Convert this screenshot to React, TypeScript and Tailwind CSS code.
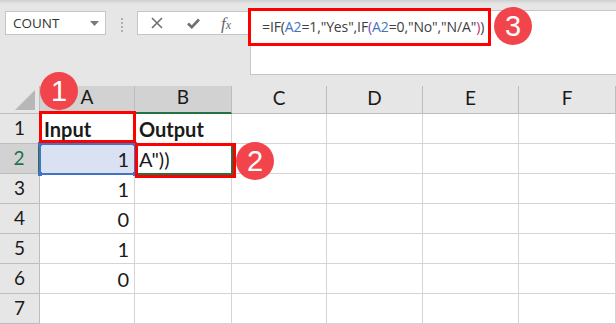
import React from 'react'

const cols = ['A', 'B', 'C', 'D', 'E', 'F']
const colW = [95, 97, 95, 96, 96, 97]
const inputs = ['1', '1', '0', '1', '0']

function Badge({ n, className }: { n: number; className: string }) {
  return (
    <div
      className={`absolute flex items-center justify-center rounded-full bg-[#f2444b] text-white text-[29px] leading-none font-[Arial,'Liberation_Sans',sans-serif] ${className}`}
    >
      {n}
    </div>
  )
}

export default function App() {
  const line = 'border-r border-b border-[#d4d4d4]'
  return (
    <div className="relative w-[616px] h-[324px] overflow-hidden bg-[#e6e6e6] font-[Lato,'Noto_Sans',sans-serif] text-[#1a1a1a]">
      {/* top shade */}
      <div className="h-[4px] bg-gradient-to-b from-[#cfcfcf] to-[#e6e6e6]" />

      {/* formula toolbar */}
      <div className="flex items-start pl-[5px] pt-[6px] h-[82px]">
        <div className="mt-[1px] flex h-[24px] w-[101px] items-center justify-between border border-[#c6c6c6] bg-white pl-[7px] pr-[6px] font-['Open_Sans',sans-serif] text-[13.5px] text-[#333]">
          <span>COUNT</span>
          <svg width="9" height="5" viewBox="0 0 9 5">
            <path d="M0 0 L9 0 L4.5 5 Z" fill="#7a7a7a" />
          </svg>
        </div>
        <div className="mt-[8px] flex w-[31px] flex-col items-center gap-[2px]">
          <span className="h-[2px] w-[2px] bg-[#b0b0b0]" />
          <span className="h-[2px] w-[2px] bg-[#b0b0b0]" />
          <span className="h-[2px] w-[2px] bg-[#b0b0b0]" />
          <span className="h-[2px] w-[2px] bg-[#b0b0b0]" />
        </div>
        <div className="mt-[1px] flex h-[24px] w-[112px] items-center border border-[#c6c6c6] bg-white pl-[13px]">
          <svg width="12" height="12" viewBox="0 0 12 12">
            <path d="M1 1 L11 11 M11 1 L1 11" stroke="#707070" strokeWidth="1.6" />
          </svg>
          <svg className="ml-[24px]" width="13" height="11" viewBox="0 0 13 11">
            <path d="M1 5.5 L4.8 9.2 L12 1.5" stroke="#707070" strokeWidth="2.6" fill="none" />
          </svg>
          <span className="ml-[21px] font-['Liberation_Serif',serif] text-[17px] leading-none italic text-[#666]">
            f<span className="text-[12px]">x</span>
          </span>
        </div>
        <div className="ml-[1px] h-[65px] flex-1 whitespace-nowrap border border-r-0 border-[#c6c6c6] bg-white pl-[11px] pt-[5px] font-['Open_Sans',sans-serif] text-[14px] tracking-[-0.12px] text-[#404040]">
          <span>=IF(</span>
          <span className="text-[#4472c4]">A2</span>
          <span>=1,"Yes",IF</span>
          <span className="text-[#7f3fbf]">(</span>
          <span className="text-[#4472c4]">A2</span>
          <span>=0,"No","N/A"</span>
          <span className="text-[#c0307a]">)</span>
          <span>)</span>
        </div>
      </div>

      {/* grid */}
      <div
        className="grid"
        style={{ gridTemplateColumns: `40px ${colW.map(w => w + 'px').join(' ')}`, gridTemplateRows: '28px repeat(7, 30px)' }}
      >
        {/* select all */}
        <div className="relative border-r border-b border-[#bdbdbd] bg-[#e6e6e6]">
          <svg className="absolute right-[4px] bottom-[3px]" width="20" height="20" viewBox="0 0 20 20">
            <path d="M20 0 L20 20 L0 20 Z" fill="#b7b7b7" />
          </svg>
        </div>
        {cols.map((c, i) => (
          <div
            key={c}
            className={`flex items-end justify-center pb-[1px] text-[19px] border-r ${
              i < 2 ? 'bg-[#d2d2d2] border-b-2 border-b-[#217346] border-r-[#bdbdbd]' : 'bg-[#e6e6e6] border-b border-[#bdbdbd]'
            }`}
          >
            {c}
          </div>
        ))}

        {Array.from({ length: 7 }, (_, r) => {
          const row = r + 1
          return (
            <React.Fragment key={row}>
              <div
                className={`flex items-center justify-center text-[19px] border-b ${
                  row === 2
                    ? 'bg-[#d2d2d2] text-[#217346] border-r-2 border-r-[#217346] border-b-[#bdbdbd]'
                    : 'bg-[#e6e6e6] border-r border-[#bdbdbd]'
                }`}
              >
                {row}
              </div>
              {/* A */}
              <div
                className={`flex items-center text-[20px] ${line} ${
                  row === 1 ? 'font-bold pl-[4px]' : 'justify-end pr-[5px]'
                } ${row === 2 ? 'bg-[#d9e1f2]' : 'bg-white'}`}
              >
                {row === 1 ? 'Input' : inputs[row - 2] ?? ''}
              </div>
              {/* B */}
              <div className={`flex items-center pl-[4px] text-[20px] bg-white ${line} ${row === 1 ? 'font-bold' : ''}`}>
                {row === 1 ? 'Output' : row === 2 ? 'A"))' : ''}
              </div>
              <div className={`bg-white ${line}`} />
              <div className={`bg-white ${line}`} />
              <div className={`bg-white ${line}`} />
              <div className={`bg-white ${line}`} />
            </React.Fragment>
          )
        })}
      </div>

      {/* A2 precedent range */}
      <div className="absolute left-[39px] top-[143px] h-[32px] w-[97px] border-2 border-[#4472c4]">
        <span className="absolute -left-[3px] -top-[3px] h-[4px] w-[4px] bg-[#4472c4]" />
        <span className="absolute -right-[3px] -top-[3px] h-[4px] w-[4px] bg-[#4472c4]" />
        <span className="absolute -left-[3px] -bottom-[3px] h-[4px] w-[4px] bg-[#4472c4]" />
        <span className="absolute -right-[3px] -bottom-[3px] h-[4px] w-[4px] bg-[#4472c4]" />
      </div>
      {/* B2 active cell */}
      <div className="absolute left-[135px] top-[143px] h-[32px] w-[98px] border-2 border-[#217346]" />

      {/* annotations */}
      <div className="absolute left-[248px] top-[8px] h-[38px] w-[243px] border-[3px] border-[#ff0000]" />
      <div className="absolute left-[39px] top-[111px] h-[32px] w-[97px] border-[3px] border-[#ff0000]" />
      <div className="absolute left-[135px] top-[143px] h-[35px] w-[101px] border-[3px] border-[#ff0000]" />

      <Badge n={3} className="left-[494px] top-[7px] h-[38px] w-[38px]" />
      <Badge n={1} className="left-[40px] top-[72px] h-[38px] w-[38px]" />
      <Badge n={2} className="left-[236px] top-[142px] h-[38px] w-[38px]" />
    </div>
  )
}
